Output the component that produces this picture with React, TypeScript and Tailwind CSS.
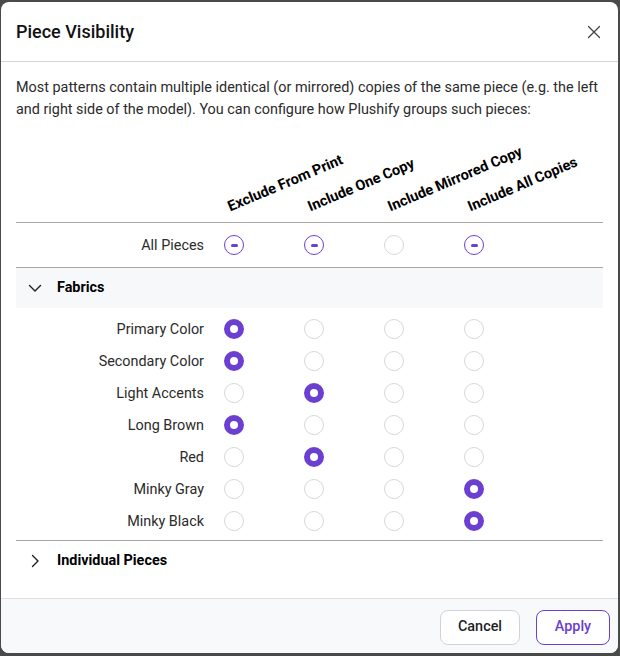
import React from 'react';

type Choice = 'exclude' | 'one' | 'mirrored' | 'all';

const columns: { key: Choice; label: string }[] = [
  { key: 'exclude', label: 'Exclude From Print' },
  { key: 'one', label: 'Include One Copy' },
  { key: 'mirrored', label: 'Include Mirrored Copy' },
  { key: 'all', label: 'Include All Copies' },
];

const fabrics: { name: string; choice: Choice }[] = [
  { name: 'Primary Color', choice: 'exclude' },
  { name: 'Secondary Color', choice: 'exclude' },
  { name: 'Light Accents', choice: 'one' },
  { name: 'Long Brown', choice: 'exclude' },
  { name: 'Red', choice: 'one' },
  { name: 'Minky Gray', choice: 'all' },
  { name: 'Minky Black', choice: 'all' },
];

function Radio({ state }: { state: 'on' | 'off' | 'mixed' }) {
  if (state === 'on') {
    return <span className="block w-5 h-5 rounded-full border-[6px] border-[#6b3fd0] bg-white" />;
  }
  if (state === 'mixed') {
    return (
      <span className="flex w-5 h-5 rounded-full border-[1.5px] border-[#6b3fd0] bg-white items-center justify-center">
        <span className="block w-[7px] h-[3px] rounded-full bg-[#6b3fd0]" />
      </span>
    );
  }
  return <span className="block w-5 h-5 rounded-full border border-[#d6d6de] bg-white" />;
}

function Chevron({ open }: { open: boolean }) {
  return (
    <svg width="16" height="16" viewBox="0 0 16 16" fill="none" stroke="#1f1f1f" strokeWidth="1.4" strokeLinecap="round" strokeLinejoin="round">
      {open ? <path d="M2.5 5.5 8 11l5.5-5.5" /> : <path d="M5.5 2.5 11 8l-5.5 5.5" />}
    </svg>
  );
}

function Row({ label, cells }: { label: string; cells: ('on' | 'off' | 'mixed')[] }) {
  return (
    <div className="grid grid-cols-[208px_80px_80px_80px_80px] h-8 items-center">
      <span className="text-right pr-5 pt-[2px] text-[14.4px] text-[#2b2b2b]">{label}</span>
      {cells.map((c, i) => (
        <span key={i}>
          <Radio state={c} />
        </span>
      ))}
    </div>
  );
}

export default function App() {
  return (
    <div className="w-[620px] h-[656px] bg-[#4a4a4a] pt-[2px] pl-[1px]" style={{ fontFamily: 'Roboto, "Noto Sans", sans-serif' }}>
      <div className="w-[617px] h-[651px] bg-white rounded-lg flex flex-col overflow-hidden">
        {/* Header */}
        <div className="h-[60px] flex items-center justify-between pl-[15px] pr-[17px] border-b border-[#d4d4d4] shrink-0">
          <h2 className="text-[18px] font-medium text-[#111]">Piece Visibility</h2>
          <svg width="14" height="14" viewBox="0 0 14 14" stroke="#444" strokeWidth="1.3" strokeLinecap="round">
            <path d="M1.5 1.5l11 11M12.5 1.5l-11 11" />
          </svg>
        </div>

        <div className="flex-1 px-[15px] pt-[15px]">
          <p className="text-[14.4px] leading-[22px] text-[#2b2b2b]">
            Most patterns contain multiple identical (or mirrored) copies of the same piece (e.g. the left and right side of the model). You can configure how Plushify groups such pieces:
          </p>

          {/* Column headings */}
          <div className="grid grid-cols-[208px_80px_80px_80px_80px] h-[102px] border-b border-[#a8a8a8]">
            <span />
            {columns.map((c) => (
              <span key={c.key} className="relative">
                <span className="absolute left-[9px] bottom-[4px] whitespace-nowrap text-[14.5px] font-bold text-black origin-bottom-left -rotate-[23deg]">
                  {c.label}
                </span>
              </span>
            ))}
          </div>

          <div className="py-[6px] border-b border-[#a8a8a8]">
            <Row label="All Pieces" cells={['mixed', 'mixed', 'off', 'mixed']} />
          </div>

          <div className="h-10 bg-[#f7f8fa] flex items-center gap-[14px] pl-[11px]">
            <Chevron open />
            <span className="text-[14.4px] font-bold text-black">Fabrics</span>
          </div>

          <div className="pt-[5px] pb-[3px] border-b border-[#a8a8a8]">
            {fabrics.map((f) => (
              <Row
                key={f.name}
                label={f.name}
                cells={columns.map((c) => (c.key === f.choice ? 'on' : 'off'))}
              />
            ))}
          </div>

          <div className="h-10 flex items-center gap-[14px] pl-[11px]">
            <Chevron open={false} />
            <span className="text-[14.4px] font-bold text-black">Individual Pieces</span>
          </div>
        </div>

        {/* Footer */}
        <div className="h-[55px] shrink-0 bg-[#f8f9fb] border-t border-[#dcdfe4] flex items-center justify-end gap-4 pr-[8px] pt-[2px]">
          <button className="h-[35px] w-[80px] rounded-lg border border-[#cfd3d9] bg-white text-[14.4px] font-medium text-[#1f1f1f]">
            Cancel
          </button>
          <button className="h-[35px] w-[74px] rounded-lg border border-[#6b3fd0] bg-white text-[14.4px] font-medium text-[#6b3fd0]">
            Apply
          </button>
        </div>
      </div>
    </div>
  );
}
